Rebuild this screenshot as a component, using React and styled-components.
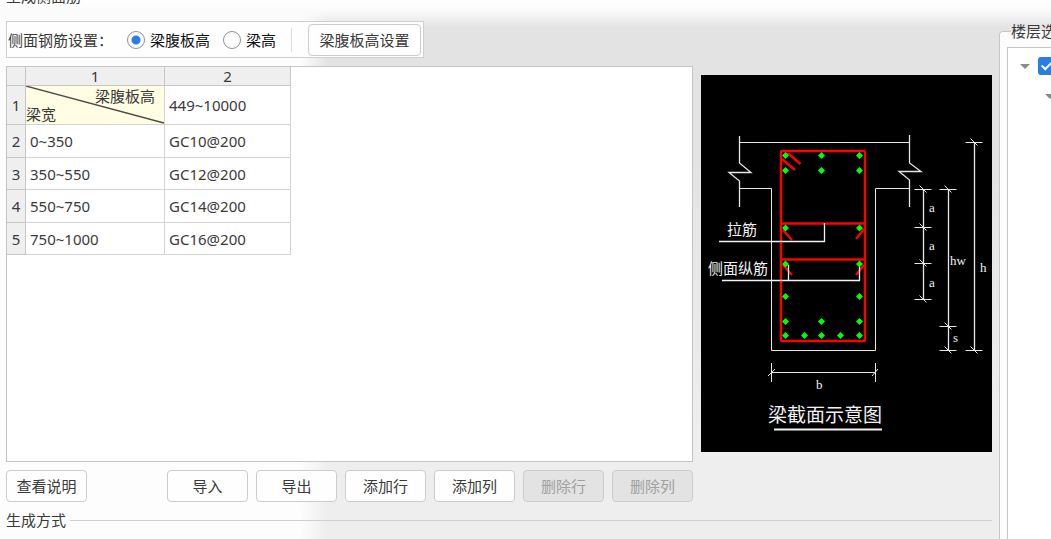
import React, { useState } from "react";
import styled, { createGlobalStyle, css } from "styled-components";

const GlobalStyle = createGlobalStyle`
  *, *::before, *::after { box-sizing: border-box; }
  body {
    margin: 0;
    font-family: "Noto Sans CJK SC", sans-serif;
    font-size: 15px;
    line-height: 20px;
    color: #3a3a3a;
  }
  button, input { font: inherit; color: inherit; }
`;

const Page = styled.div`
  display: flex;
  min-height: 100vh;
  overflow: hidden;
  background:
    linear-gradient(to bottom, #ffffff 0, #fbfbfb 10px, rgba(251, 251, 251, 0) 28px),
    linear-gradient(to right, #fdfdfd 300px, rgba(253, 253, 253, 0) 328px),
    linear-gradient(to bottom, #e3e3e3 150px, #eeeeee 430px);
`;

const Main = styled.main`
  flex: 1;
  min-width: 0;
  padding: 0 7px 0 6px;
`;

const ClippedTitle = styled.h2`
  display: flex;
  align-items: flex-end;
  height: 6px;
  margin: 0 0 15px;
  overflow: hidden;
  font-size: 15px;
  font-weight: 400;
`;

const Columns = styled.div`
  display: grid;
  grid-template-columns: minmax(0, 1fr) 291px;
  column-gap: 8px;
`;

const Settings = styled.section`
  display: flex;
  flex-direction: column;
  align-items: flex-start;
  gap: 8px;
`;

const Toolbar = styled.div`
  display: flex;
  align-items: center;
  height: 37px;
  padding: 0 2px 0 1px;
  border: 1px solid #cbd0d3;
  background: #fefefe;
  white-space: nowrap;
`;

const ToolbarLabel = styled.span`
  margin-right: 14px;
`;

const RadioLabel = styled.label`
  display: flex;
  align-items: center;
  gap: 5px;
  margin-right: 13px;
  color: #111111;
`;

const Radio = styled.input`
  appearance: none;
  width: 18px;
  height: 18px;
  margin: 0;
  border: 1px solid #8f8f8f;
  border-radius: 50%;
  background: #ffffff;
  &:checked {
    background: radial-gradient(circle, #2a7de1 4px, #ffffff 5px);
  }
`;

const Separator = styled.span`
  width: 1px;
  height: 24px;
  margin: 0 16px 0 2px;
  background: #dcdcdc;
`;

const Button = styled.button`
  width: ${(p) => (p.$wide ? 113 : 81)}px;
  height: 32px;
  padding: 0;
  border: 1px solid #cccccc;
  border-radius: 4px;
  background: #fefefe;
  line-height: 20px;
  &:disabled {
    background: #e3e3e3;
    color: #a0a0a0;
  }
`;

const GridPanel = styled.div`
  width: 100%;
  height: 396px;
  border: 1px solid #c4c4c4;
  background: #ffffff;
`;

const Table = styled.table`
  width: 284px;
  table-layout: fixed;
  border-collapse: separate;
  border-spacing: 0;
  font-family: "Noto Sans", "Noto Sans CJK SC", sans-serif;
  font-size: 15px;
  line-height: 18px;
`;

const edges = css`
  border-right: 1px solid #d4d4d4;
  border-bottom: 1px solid #d4d4d4;
`;

const HeadCell = styled.th`
  ${edges}
  padding: 0;
  border-color: #c6c6c6;
  background: #efefef;
  font-weight: 400;
`;

const Cell = styled.td`
  ${edges}
  padding: 0 4px;
`;

const Row = styled.tr`
  height: 33px;
  &:nth-child(odd) { height: 32px; }
  &:first-child { height: 39px; }
`;

const CornerCell = styled.td`
  ${edges}
  position: relative;
  padding: 0;
  background: #fffde4;
  font-family: "Noto Sans CJK SC", sans-serif;
`;

const Diagonal = styled.svg`
  position: absolute;
  inset: 0;
  width: 100%;
  height: 100%;
`;

const CornerLabel = styled.div`
  padding-right: 9px;
  text-align: ${(p) => p.$align};
`;

const Actions = styled.div`
  display: flex;
  gap: 8px;
  width: 100%;
`;

const Spacer = styled.span`
  flex: 1;
  margin-right: -8px;
`;

const DiagramColumn = styled.section`
  padding-top: 54px;
`;

const Diagram = styled.svg`
  display: block;
  width: 100%;
  background: #000000;
`;

const GroupTitle = styled.h2`
  display: flex;
  align-items: center;
  gap: 4px;
  margin: 8px 0 0;
  font-size: 15px;
  font-weight: 400;
  &::after {
    content: "";
    flex: 1;
    height: 1px;
    background: #cfcfcf;
  }
`;

const Aside = styled.aside`
  flex: 0 0 52px;
  display: flex;
  overflow: hidden;
  padding-top: 21px;
`;

const FloorGroup = styled.fieldset`
  flex: 0 0 240px;
  margin: 0;
  padding: 6px 7px 0;
  border: 1px solid #c6c6c6;
  border-radius: 4px 0 0 0;
  border-bottom: 0;
  background: #fcfcfc;
`;

const Legend = styled.legend`
  margin-left: 4px;
  padding: 0;
`;

const Tree = styled.div`
  height: 100%;
  padding: 3px 12px;
  border: 1px solid #c6c6c6;
  border-bottom: 0;
  background: #ffffff;
`;

const TreeRow = styled.label`
  display: flex;
  align-items: center;
  gap: 8px;
  height: 30px;
  padding-left: ${(p) => p.$depth * 25}px;
`;

const Arrow = styled.span`
  border: 5px solid transparent;
  border-top-color: #8a8a8a;
  border-bottom: 0;
`;

const Check = styled.input`
  appearance: none;
  position: relative;
  width: 18px;
  height: 18px;
  margin: 0;
  border-radius: 3px;
  background: #2a7de1;
  &::after {
    content: "";
    position: absolute;
    left: 6px;
    top: 2px;
    width: 6px;
    height: 11px;
    border: solid #ffffff;
    border-width: 0 2px 2px 0;
    transform: rotate(45deg);
  }
`;

const rows = [
  ["0~350", "GC10@200"],
  ["350~550", "GC12@200"],
  ["550~750", "GC14@200"],
  ["750~1000", "GC16@200"],
];

const bars = [
  [84.5, 80.5], [120.5, 80.5], [158.5, 80.5],
  [84.5, 95.5], [120.5, 95.5], [158.5, 95.5],
  [84.5, 153], [158.5, 153],
  [84.5, 189], [158.5, 189],
  [84.5, 221.5], [158.5, 221.5],
  [84.5, 246.5], [120.5, 246.5], [158.5, 246.5],
  [84.5, 260.5], [103.5, 260.5], [120.5, 260.5], [139.5, 260.5], [158.5, 260.5],
];

const ticks = [
  [222.5, 114.5], [222.5, 152.5], [222.5, 188.5], [222.5, 224.5],
  [247.5, 114.5], [247.5, 251.5], [247.5, 275.5],
  [273.5, 67.5], [273.5, 275.5],
];

function BeamSection() {
  return (
    <Diagram viewBox="0 0 291 377" role="img" aria-label="梁截面示意图">
      <g fill="none" stroke="#e6e6e6" strokeWidth="1">
        <path d="M38.5 61V88L50 97.5H28L38.5 106V132" strokeWidth="1.3" />
        <path d="M208.5 60V88L220 96.5H198L208.5 105V132" strokeWidth="1.3" />
        <path d="M38.5 67.5H208.5M38.5 113.5H70.5V275.5H174.5V113.5H208.5" />
        <path d="M222.5 114V224M247.5 114V275M273.5 67V275" strokeWidth="1.3" />
        {ticks.map(([x, y]) => (
          <path key={`${x}-${y}`} d={`M${x - 9} ${y}h17M${x - 4} ${y - 4}l7 7`} />
        ))}
        <path d="M70.5 288V307M174.5 288V307M70.5 297.5H174.5M67 301l7-7M171 301l6-7" />
      </g>
      <g fill="none" stroke="#ff0000" strokeWidth="2.4">
        <rect x="80" y="76" width="84" height="190" rx="1" />
        <path d="M80 148.5H164M80 184.5H164" />
        <path d="M84 79H88L99.500 89M81 84L94 95" />
        <path d="M82 155L91 165M163 154L155 164M82 190L91 200M163 190L155 200" />
      </g>
      <g fill="#00ff00">
        {bars.map(([x, y]) => (
          <path key={`${x}-${y}`} d={`M${x} ${y - 3.5}l3.500 3.500l-3.500 3.500l-3.500 -3.500z`} />
        ))}
      </g>
      <g fill="none" stroke="#f2f2f2" strokeWidth="1">
        <path d="M18 166.5H123.5V148M21 205.5H158.5V192M87.5 205V190" strokeWidth="1.3" />
        <path d="M73 354.5H181" strokeWidth="2" />
      </g>
      <g fill="#f2f2f2" fontFamily='"Liberation Serif", serif' fontSize="13">
        <text x="228" y="137">a</text>
        <text x="228" y="175">a</text>
        <text x="228" y="212">a</text>
        <text x="249" y="190">hw</text>
        <text x="279" y="197">h</text>
        <text x="252" y="267">s</text>
        <text x="115" y="314">b</text>
      </g>
      <g fill="#f2f2f2" fontFamily='"Noto Sans CJK SC", sans-serif' fontSize="15">
        <text x="26" y="160">拉筋</text>
        <text x="7" y="199">侧面纵筋</text>
        <text x="67" y="347" fontSize="19">梁截面示意图</text>
      </g>
    </Diagram>
  );
}

export default function App() {
  const [mode, setMode] = useState("web");
  return (
    <>
      <GlobalStyle />
      <Page>
        <Main>
          <ClippedTitle>生成侧面筋</ClippedTitle>
          <Columns>
            <Settings>
              <Toolbar>
                <ToolbarLabel>侧面钢筋设置：</ToolbarLabel>
                <RadioLabel>
                  <Radio type="radio" name="mode" checked={mode === "web"} onChange={() => setMode("web")} />
                  梁腹板高
                </RadioLabel>
                <RadioLabel>
                  <Radio type="radio" name="mode" checked={mode === "beam"} onChange={() => setMode("beam")} />
                  梁高
                </RadioLabel>
                <Separator />
                <Button type="button" $wide>梁腹板高设置</Button>
              </Toolbar>
              <GridPanel>
                <Table>
                  <colgroup>
                    <col width="19" />
                    <col width="139" />
                    <col />
                  </colgroup>
                  <thead>
                    <tr>
                      <HeadCell />
                      <HeadCell scope="col">1</HeadCell>
                      <HeadCell scope="col">2</HeadCell>
                    </tr>
                  </thead>
                  <tbody>
                    <Row>
                      <HeadCell scope="row">1</HeadCell>
                      <CornerCell>
                        <Diagonal viewBox="0 0 138 39" preserveAspectRatio="none" aria-hidden="true">
                          <path d="M0 0L138 38" stroke="#4a4a44" fill="none" strokeWidth="1.3" />
                        </Diagonal>
                        <CornerLabel $align="right">梁腹板高</CornerLabel>
                        <CornerLabel $align="left">梁宽</CornerLabel>
                      </CornerCell>
                      <Cell>449~10000</Cell>
                    </Row>
                    {rows.map(([width, bar], i) => (
                      <Row key={width}>
                        <HeadCell scope="row">{i + 2}</HeadCell>
                        <Cell>{width}</Cell>
                        <Cell>{bar}</Cell>
                      </Row>
                    ))}
                  </tbody>
                </Table>
              </GridPanel>
              <Actions>
                <Button type="button">查看说明</Button>
                <Spacer />
                <Button type="button">导入</Button>
                <Button type="button">导出</Button>
                <Button type="button">添加行</Button>
                <Button type="button">添加列</Button>
                <Button type="button" disabled>删除行</Button>
                <Button type="button" disabled>删除列</Button>
              </Actions>
            </Settings>
            <DiagramColumn>
              <BeamSection />
            </DiagramColumn>
          </Columns>
          <GroupTitle>生成方式</GroupTitle>
        </Main>
        <Aside>
          <FloorGroup>
            <Legend>楼层选择</Legend>
            <Tree>
              <TreeRow $depth={0}>
                <Arrow />
                <Check type="checkbox" defaultChecked aria-label="全部楼层" />
              </TreeRow>
              <TreeRow $depth={1}>
                <Arrow />
                <Check type="checkbox" defaultChecked aria-label="楼层" />
              </TreeRow>
            </Tree>
          </FloorGroup>
        </Aside>
      </Page>
    </>
  );
}
